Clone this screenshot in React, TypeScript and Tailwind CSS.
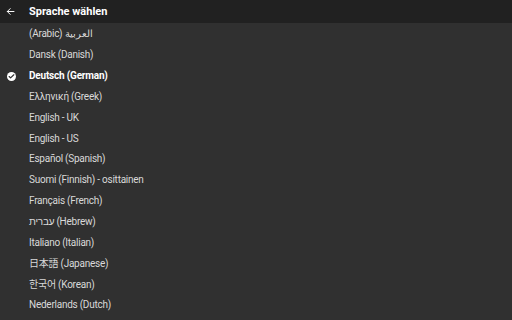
import { Check } from 'lucide-react'

const languages = [
  { label: '(Arabic) العربية' },
  { label: 'Dansk (Danish)' },
  { label: 'Deutsch (German)', selected: true },
  { label: 'Ελληνική (Greek)' },
  { label: 'English - UK' },
  { label: 'English - US' },
  { label: 'Español (Spanish)' },
  { label: 'Suomi (Finnish) - osittainen' },
  { label: 'Français (French)' },
  { label: 'עברית (Hebrew)' },
  { label: 'Italiano (Italian)' },
  { label: '日本語 (Japanese)' },
  { label: '한국어 (Korean)' },
  { label: 'Nederlands (Dutch)' },
]

function BackArrow() {
  return (
    <svg width="9" height="9" viewBox="0 0 24 24" fill="none" stroke="#ffffff" strokeWidth="2.6" strokeLinecap="square">
      <path d="M21 12H4" />
      <path d="M11 4.5 3.5 12l7.5 7.5" />
    </svg>
  )
}

export default function App() {
  return (
    <div
      className="w-[512px] h-[320px] overflow-hidden bg-[#303030] flex flex-col"
      style={{ fontFamily: 'Roboto, "Noto Sans", "Noto Sans CJK JP", "Noto Sans CJK KR", sans-serif' }}
    >
      <div className="h-[23px] shrink-0 bg-[#212121] flex items-center">
        <div className="w-[29px] pl-[6px] flex items-center">
          <BackArrow />
        </div>
        <span className="text-white font-bold text-[11px] leading-none">Sprache wählen</span>
      </div>
      <div className="flex flex-col pt-[1px]">
        {languages.map((lang) => (
          <div key={lang.label} className="h-[20.85px] flex items-center">
            <div className="w-[29px] pl-[7px] flex items-center">
              {lang.selected && (
                <div className="w-[9px] h-[9px] rounded-full bg-white flex items-center justify-center">
                  <Check size={7} strokeWidth={4} color="#303030" />
                </div>
              )}
            </div>
            <span
              className={
                lang.selected
                  ? 'text-white font-bold text-[10px] leading-none tracking-[-0.2px]'
                  : 'text-[#d9d9d9] text-[10px] leading-none tracking-[-0.25px]'
              }
            >
              {lang.label}
            </span>
          </div>
        ))}
      </div>
    </div>
  )
}
